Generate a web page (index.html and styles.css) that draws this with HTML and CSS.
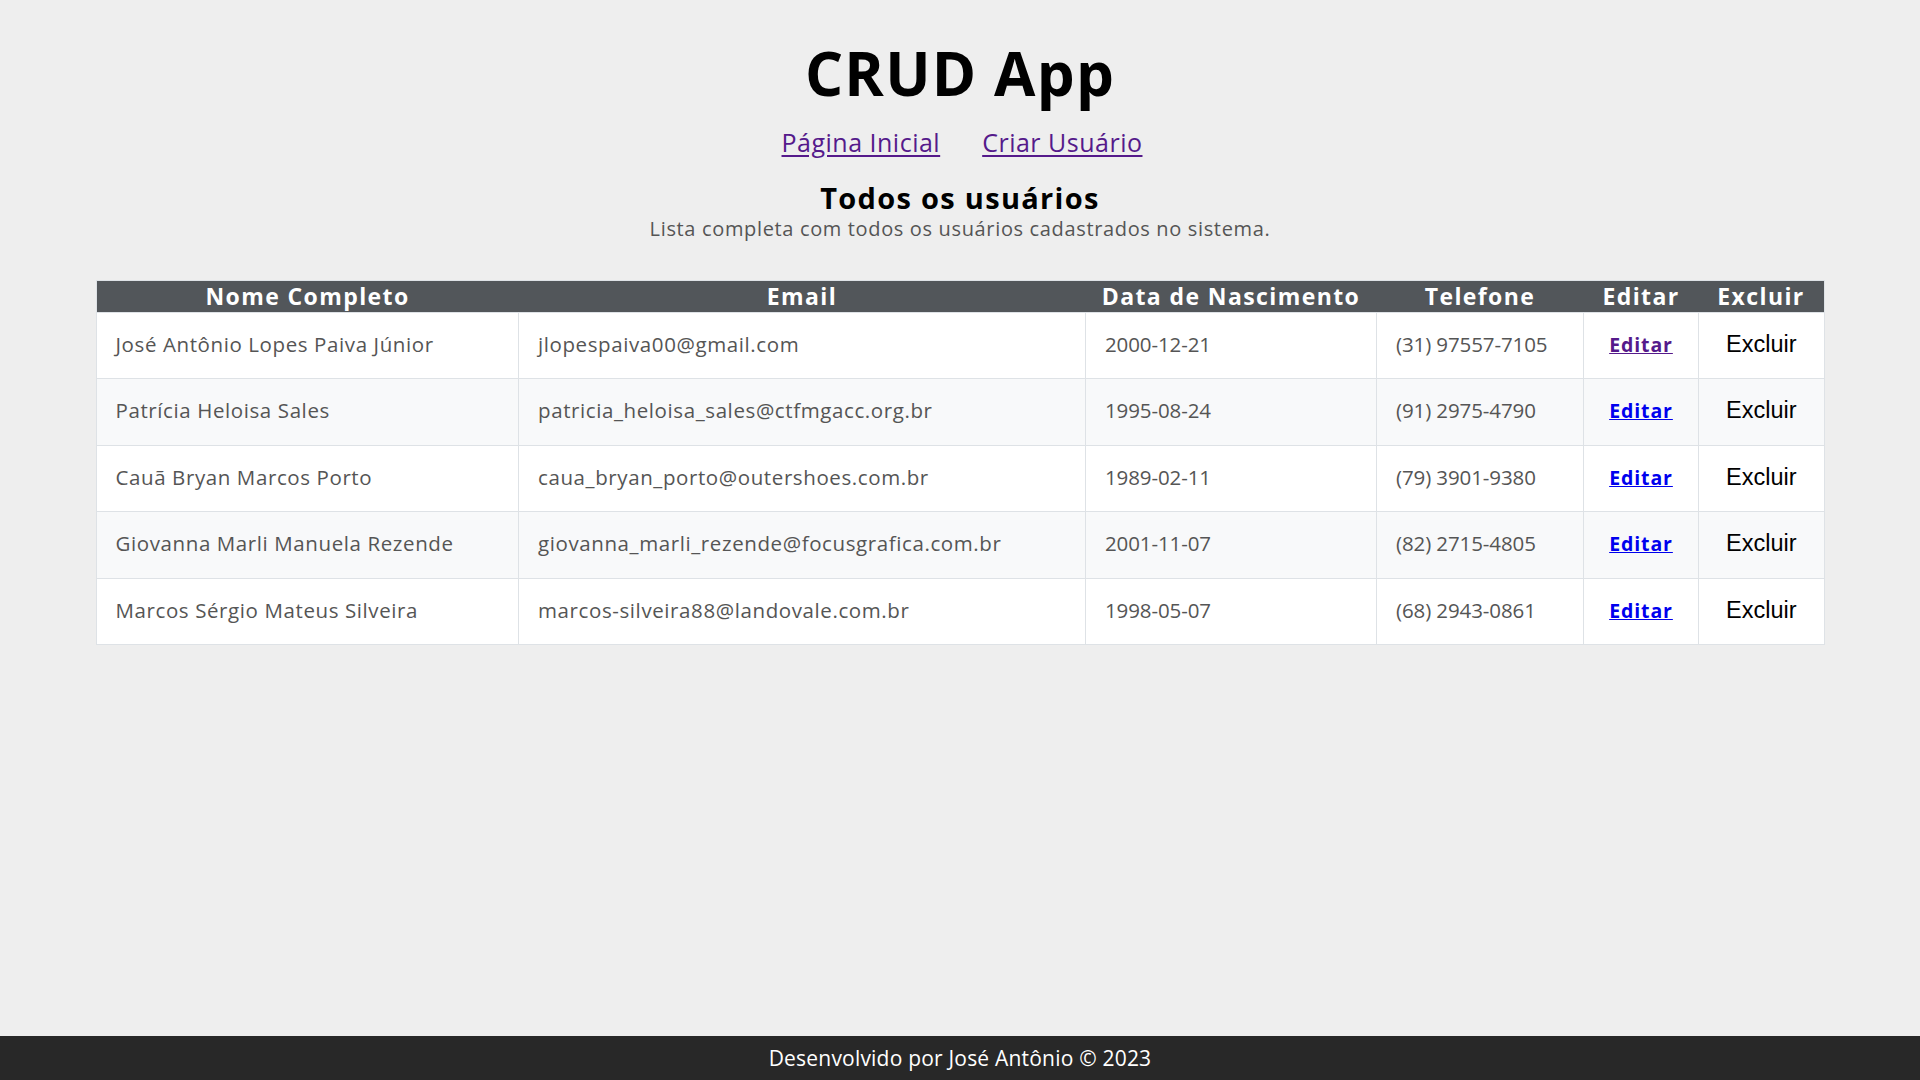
FILE: index.html
```html
<!DOCTYPE html>
<html lang="pt-BR">
<head>
<meta charset="utf-8">
<title>CRUD App</title>
<link rel="stylesheet" href="styles.css">
</head>
<body>
<div class="page">
  <header class="top">
    <h1 class="title">CRUD App</h1>
    <nav class="nav">
      <a class="nav-link" href="#">Página Inicial</a>
      <a class="nav-link" href="#">Criar Usuário</a>
    </nav>
  </header>
  <main class="content">
    <h2 class="section-title">Todos os usuários</h2>
    <p class="section-sub">Lista completa com todos os usuários cadastrados no sistema.</p>
    <table class="users">
      <thead>
        <tr>
          <th class="c-name">Nome Completo</th>
          <th class="c-email">Email</th>
          <th class="c-date">Data de Nascimento</th>
          <th class="c-phone">Telefone</th>
          <th class="c-edit">Editar</th>
          <th class="c-del">Excluir</th>
        </tr>
      </thead>
      <tbody>
        <tr>
          <td>José Antônio Lopes Paiva Júnior</td>
          <td>jlopespaiva00@gmail.com</td>
          <td class="num">2000-12-21</td>
          <td class="num">(31) 97557-7105</td>
          <td class="center"><a class="edit visited" href="#">Editar</a></td>
          <td class="center"><button class="del">Excluir</button></td>
        </tr>
        <tr>
          <td>Patrícia Heloisa Sales</td>
          <td>patricia_heloisa_sales@ctfmgacc.org.br</td>
          <td class="num">1995-08-24</td>
          <td class="num">(91) 2975-4790</td>
          <td class="center"><a class="edit" href="#">Editar</a></td>
          <td class="center"><button class="del">Excluir</button></td>
        </tr>
        <tr>
          <td>Cauã Bryan Marcos Porto</td>
          <td>caua_bryan_porto@outershoes.com.br</td>
          <td class="num">1989-02-11</td>
          <td class="num">(79) 3901-9380</td>
          <td class="center"><a class="edit" href="#">Editar</a></td>
          <td class="center"><button class="del">Excluir</button></td>
        </tr>
        <tr>
          <td>Giovanna Marli Manuela Rezende</td>
          <td>giovanna_marli_rezende@focusgrafica.com.br</td>
          <td class="num">2001-11-07</td>
          <td class="num">(82) 2715-4805</td>
          <td class="center"><a class="edit" href="#">Editar</a></td>
          <td class="center"><button class="del">Excluir</button></td>
        </tr>
        <tr>
          <td>Marcos Sérgio Mateus Silveira</td>
          <td>marcos-silveira88@landovale.com.br</td>
          <td class="num">1998-05-07</td>
          <td class="num">(68) 2943-0861</td>
          <td class="center"><a class="edit" href="#">Editar</a></td>
          <td class="center"><button class="del">Excluir</button></td>
        </tr>
      </tbody>
    </table>
  </main>
  <footer class="footer">Desenvolvido por José Antônio © 2023</footer>
</div>
</body>
</html>
```

FILE: styles.css
```css
html, body {
  margin: 0;
  padding: 0;
}
body {
  background: #eeeeee;
  font-family: "Open Sans", "Noto Sans", sans-serif;
  color: #000;
}
.page {
  min-height: 100vh;
  display: flex;
  flex-direction: column;
}
.top {
  display: flex;
  flex-direction: column;
  align-items: center;
}
.title {
  margin: 37px 0 0;
  font-size: 60px;
  line-height: 72px;
  font-weight: 700;
  letter-spacing: 1.2px;
}
.nav {
  display: flex;
  gap: 42px;
  margin-top: 18px;
  padding-left: 4px;
}
.nav-link {
  font-size: 25px;
  line-height: 30px;
  letter-spacing: 0.5px;
  color: #551a8b;
  text-decoration: underline;
  text-underline-offset: 3px;
}
.content {
  flex: 1;
  display: flex;
  flex-direction: column;
  align-items: center;
}
.section-title {
  margin: 24px 0 0;
  font-size: 29px;
  line-height: 34px;
  font-weight: 700;
  letter-spacing: 1.3px;
}
.section-sub {
  margin: 2px 0 0;
  font-size: 20px;
  line-height: 24px;
  letter-spacing: 0.65px;
  color: #555;
}
.users {
  margin-top: 39px;
  width: 1728px;
  border-collapse: collapse;
  table-layout: fixed;
  border: 1px solid #dee2e6;
  background: #fff;
}
.users th {
  background: #52565a;
  color: #fff;
  font-size: 23px;
  line-height: 31px;
  font-weight: 700;
  letter-spacing: 1.4px;
  padding: 0;
  text-align: center;
}
.c-name { width: 422px; }
.c-email { width: 567px; }
.c-date { width: 291px; }
.c-phone { width: 207px; }
.c-edit { width: 115px; }
.c-del { width: 125px; }
.users td {
  border: 1px solid #dee2e6;
  padding: 19px 19px 21px;
  font-size: 20.5px;
  line-height: 25.4px;
  letter-spacing: 0.6px;
  color: #555;
  white-space: nowrap;
}
.users td.num {
  letter-spacing: -0.1px;
}
.users tbody tr:nth-child(even) td {
  background: #f8f9fa;
}
.users td.center {
  text-align: center;
  padding-left: 0;
  padding-right: 0;
}
.edit {
  font-weight: 700;
  font-size: 19.5px;
  letter-spacing: 0.9px;
  color: #0000ee;
  text-decoration: underline;
}
.edit.visited {
  color: #551a8b;
}
.del {
  font-family: "Liberation Sans", Arial, sans-serif;
  font-size: 23.5px;
  letter-spacing: 0;
  color: #000;
  background: transparent;
  border: none;
  padding: 0;
  line-height: 25px;
}
.footer {
  background: #282828;
  color: #fff;
  height: 44px;
  display: flex;
  align-items: center;
  justify-content: center;
  font-size: 21px;
  letter-spacing: 0.2px;
}
```
